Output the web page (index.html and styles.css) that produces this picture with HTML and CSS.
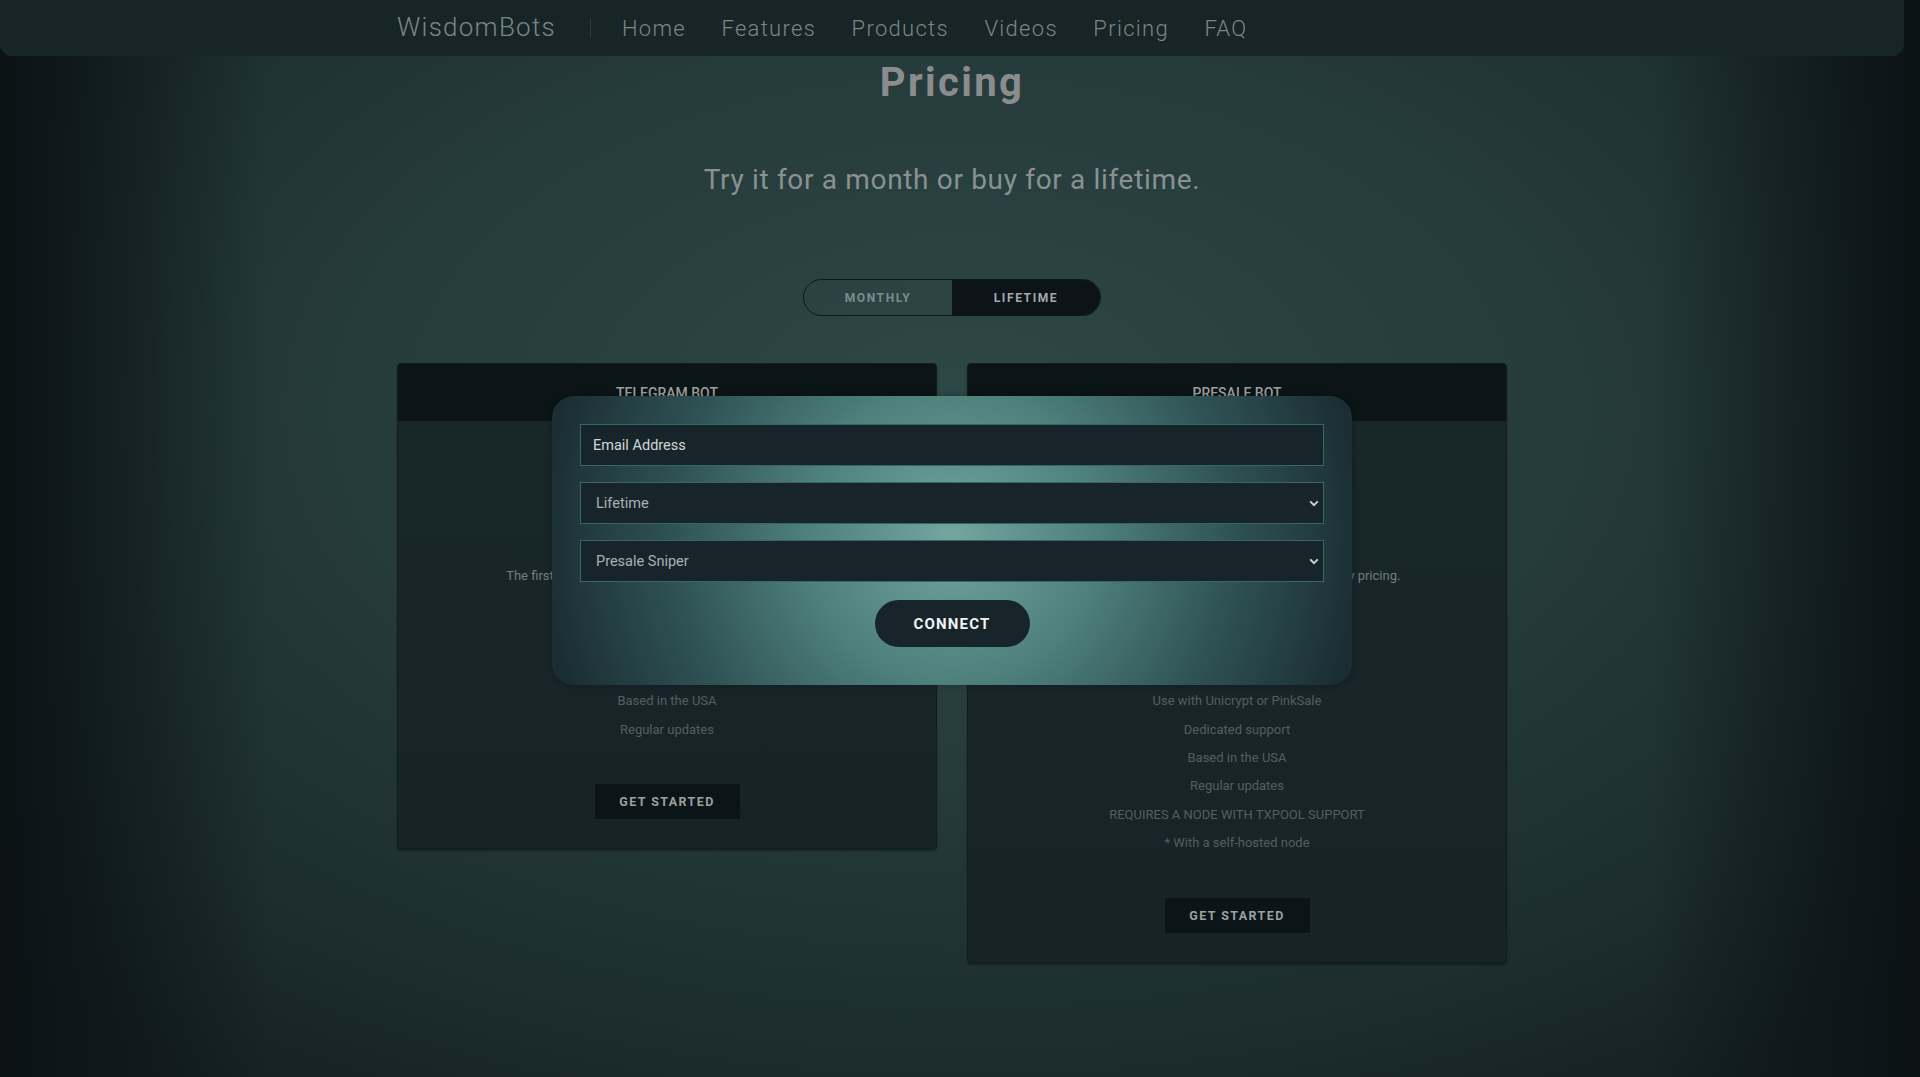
FILE: index.html
```html
<!DOCTYPE html>
<html lang="en">
<head>
<meta charset="utf-8">
<title>Pricing - WisdomBots</title>
<link rel="stylesheet" href="styles.css">
</head>
<body>
<div class="page">
  <header class="nav">
    <div class="nav-inner">
      <a class="logo" href="#">WisdomBots</a>
      <span class="nav-sep"></span>
      <nav class="links">
        <a href="#">Home</a>
        <a href="#">Features</a>
        <a href="#">Products</a>
        <a href="#">Videos</a>
        <a href="#">Pricing</a>
        <a href="#">FAQ</a>
      </nav>
    </div>
  </header>

  <main class="pricing">
    <h1 class="title">Pricing</h1>
    <p class="subtitle">Try it for a month or buy for a lifetime.</p>

    <div class="toggle">
      <button class="toggle-btn">MONTHLY</button>
      <button class="toggle-btn active">LIFETIME</button>
    </div>

    <div class="cards">
      <section class="card">
        <div class="card-head">TELEGRAM BOT</div>
        <div class="card-body">
          <div class="price">$499</div>
          <p class="desc">The first Telegram bot with lifetime and monthly pricing.</p>
          <ul class="features">
            <li>Snipe tokens right from Telegram</li>
            <li>Works on BSC and ETH</li>
            <li>Dedicated support</li>
            <li>Based in the USA</li>
            <li>Regular updates</li>
          </ul>
          <a class="cta" href="#">GET STARTED</a>
        </div>
      </section>

      <section class="card">
        <div class="card-head">PRESALE BOT</div>
        <div class="card-body">
          <div class="price">$999</div>
          <p class="desc">The first presale sniper with lifetime and monthly pricing.</p>
          <ul class="features">
            <li>Buy presales the moment they open</li>
            <li>Works on BSC and ETH</li>
            <li>Multiple wallets</li>
            <li>Use with Unicrypt or PinkSale</li>
            <li>Dedicated support</li>
            <li>Based in the USA</li>
            <li>Regular updates</li>
            <li>REQUIRES A NODE WITH TXPOOL SUPPORT</li>
            <li>* With a self-hosted node</li>
          </ul>
          <a class="cta" href="#">GET STARTED</a>
        </div>
      </section>
    </div>
  </main>

  <div class="modal">
    <button class="modal-close" aria-label="Close">
      <svg width="10" height="10" viewBox="0 0 10 10"><path d="M1 1L9 9M9 1L1 9" stroke="#1c3035" stroke-width="1.3" fill="none"/></svg>
    </button>
    <form class="modal-form">
      <input class="field" type="email" placeholder="Email Address">
      <div class="select-wrap">
        <select class="field select">
          <option>Lifetime</option>
          <option>Monthly</option>
        </select>
        <svg class="chev" width="10" height="7" viewBox="0 0 10 7"><path d="M1.2 1.4L5 5.2L8.8 1.4" stroke="#c9d2d2" stroke-width="2" fill="none"/></svg>
      </div>
      <div class="select-wrap">
        <select class="field select">
          <option>Presale Sniper</option>
          <option>Telegram Bot</option>
        </select>
        <svg class="chev" width="10" height="7" viewBox="0 0 10 7"><path d="M1.2 1.4L5 5.2L8.8 1.4" stroke="#c9d2d2" stroke-width="2" fill="none"/></svg>
      </div>
      <button type="button" class="connect">CONNECT</button>
    </form>
  </div>
</div>
</body>
</html>
```

FILE: styles.css
```css
* { box-sizing: border-box; }

html, body {
  margin: 0;
  padding: 0;
  height: 100%;
}

body {
  font-family: Roboto, "Noto Sans", "Liberation Sans", sans-serif;
  background-color: #172628;
  background-image:
    linear-gradient(to right, #0a1214 0%, rgba(10,18,20,0) 14%, rgba(10,18,20,0) 86%, #0a1214 100%),
    radial-gradient(ellipse 70% 75% at 50% 38%, #2e4747 0%, #263b3b 45%, #1c2c2f 80%, #152124 100%);
  min-height: 1077px;
  overflow: hidden;
}

.page {
  position: relative;
  width: 1904px;
  min-height: 1077px;
}

/* NAV */
.nav {
  height: 56px;
  background: #172527;
  border-radius: 0 0 12px 12px;
}
.nav-inner {
  width: 1110px;
  margin: 0 auto;
  height: 56px;
  display: flex;
  align-items: center;
}
.logo {
  color: #7b8686;
  font-weight: 300;
  font-size: 26px;
  letter-spacing: 1.25px;
  text-decoration: none;
  margin-top: -2px;
}
.nav-sep {
  width: 1px;
  height: 20px;
  background: #2b3a3b;
  margin: 0 31px 0 34px;
}
.links {
  display: flex;
  gap: 35.5px;
}
.links a {
  color: #7b8686;
  font-weight: 300;
  font-size: 22px;
  letter-spacing: 1.3px;
  text-decoration: none;
}

/* HEADINGS */
.pricing {
  display: flex;
  flex-direction: column;
  align-items: center;
}
.title {
  margin: 3px 0 0;
  font-size: 40px;
  line-height: 48px;
  font-weight: 700;
  color: #8b8c8c;
  letter-spacing: 2.4px;
}
.subtitle {
  margin: 56px 0 0;
  font-size: 28px;
  line-height: 34px;
  color: #8a9191;
  letter-spacing: 0.67px;
}

/* TOGGLE */
.toggle {
  margin-top: 82px;
  display: flex;
  width: 298px;
  height: 37px;
  border: 1px solid #0d1719;
  border-radius: 19px;
  overflow: hidden;
}
.toggle-btn {
  flex: 1;
  border: 0;
  background: transparent;
  font-family: inherit;
  font-weight: 700;
  font-size: 12px;
  letter-spacing: 1.6px;
  color: #7d8b8d;
  padding: 0;
}
.toggle-btn.active {
  background: #0c1417;
  color: #a0aab0;
}

/* CARDS */
.cards {
  margin-top: 47px;
  display: flex;
  gap: 30px;
  align-items: flex-start;
}
.card {
  width: 540px;
  border-radius: 4px;
  overflow: hidden;
  background: #18262a;
  border: 1px solid #121d20;
  box-shadow: 0 2px 2px rgba(0,0,0,0.35);
}
.card-head {
  height: 57px;
  background: #0b1416;
  display: flex;
  align-items: center;
  justify-content: center;
  font-size: 14px;
  font-weight: 500;
  color: #9d9f9f;
  padding-top: 1px;
}
.card-body {
  display: flex;
  flex-direction: column;
  align-items: center;
  padding: 0 20px 29px;
  background: linear-gradient(#18272a, #172427);
}
.price {
  margin-top: 45px;
  font-size: 44px;
  line-height: 56px;
  font-weight: 700;
  color: #8b8c8c;
}
.desc {
  margin: 40px 0 0;
  font-size: 13px;
  line-height: 28px;
  color: #737d7d;
  text-align: center;
  white-space: nowrap;
}
.features {
  list-style: none;
  margin: 12px 0 0;
  padding: 0;
  text-align: center;
}
.features li {
  font-size: 13px;
  line-height: 28.4px;
  color: #535f5f;
}
.cta {
  margin-top: 40px;
  width: 145px;
  height: 35px;
  background: #0b1416;
  color: #9ba0a0;
  font-weight: 700;
  font-size: 12.5px;
  letter-spacing: 1.4px;
  text-decoration: none;
  display: flex;
  align-items: center;
  justify-content: center;
}

/* MODAL */
.modal {
  position: absolute;
  top: 396px;
  left: 552px;
  width: 800px;
  height: 289px;
  border-radius: 22px;
  padding: 28px 28px 38px;
  background: radial-gradient(circle at 50% 48%, #72a69f 0px, #4d7f7b 150px, #2e5153 285px, #1b2e33 410px);
  box-shadow: 0 0 6px rgba(0,0,0,0.25);
}
.modal-close {
  position: absolute;
  top: 14px;
  right: 12px;
  width: 12px;
  height: 12px;
  border: 0;
  padding: 0;
  background: transparent;
  display: flex;
  align-items: center;
  justify-content: center;
}
.modal-form {
  display: flex;
  flex-direction: column;
  gap: 16px;
}
.field {
  width: 744px;
  height: 42px;
  background: #17242a;
  border: 1px solid #3a6765;
  border-radius: 0;
  color: #d6dcdc;
  font-family: inherit;
  font-size: 14.5px;
  padding: 0 12px;
  outline: none;
}
.field::placeholder {
  color: #d0d7d7;
}
.select-wrap {
  position: relative;
}
.select {
  appearance: none;
  -webkit-appearance: none;
  color: #a9b1b1;
  padding-left: 15px;
}
.chev {
  position: absolute;
  right: 5px;
  top: 18px;
}
.connect {
  align-self: center;
  margin-top: 2px;
  width: 155px;
  height: 47px;
  border: 0;
  border-radius: 24px;
  background: #17252a;
  color: #f1f3f3;
  font-family: inherit;
  font-weight: 700;
  font-size: 15px;
  letter-spacing: 1.2px;
}
```
